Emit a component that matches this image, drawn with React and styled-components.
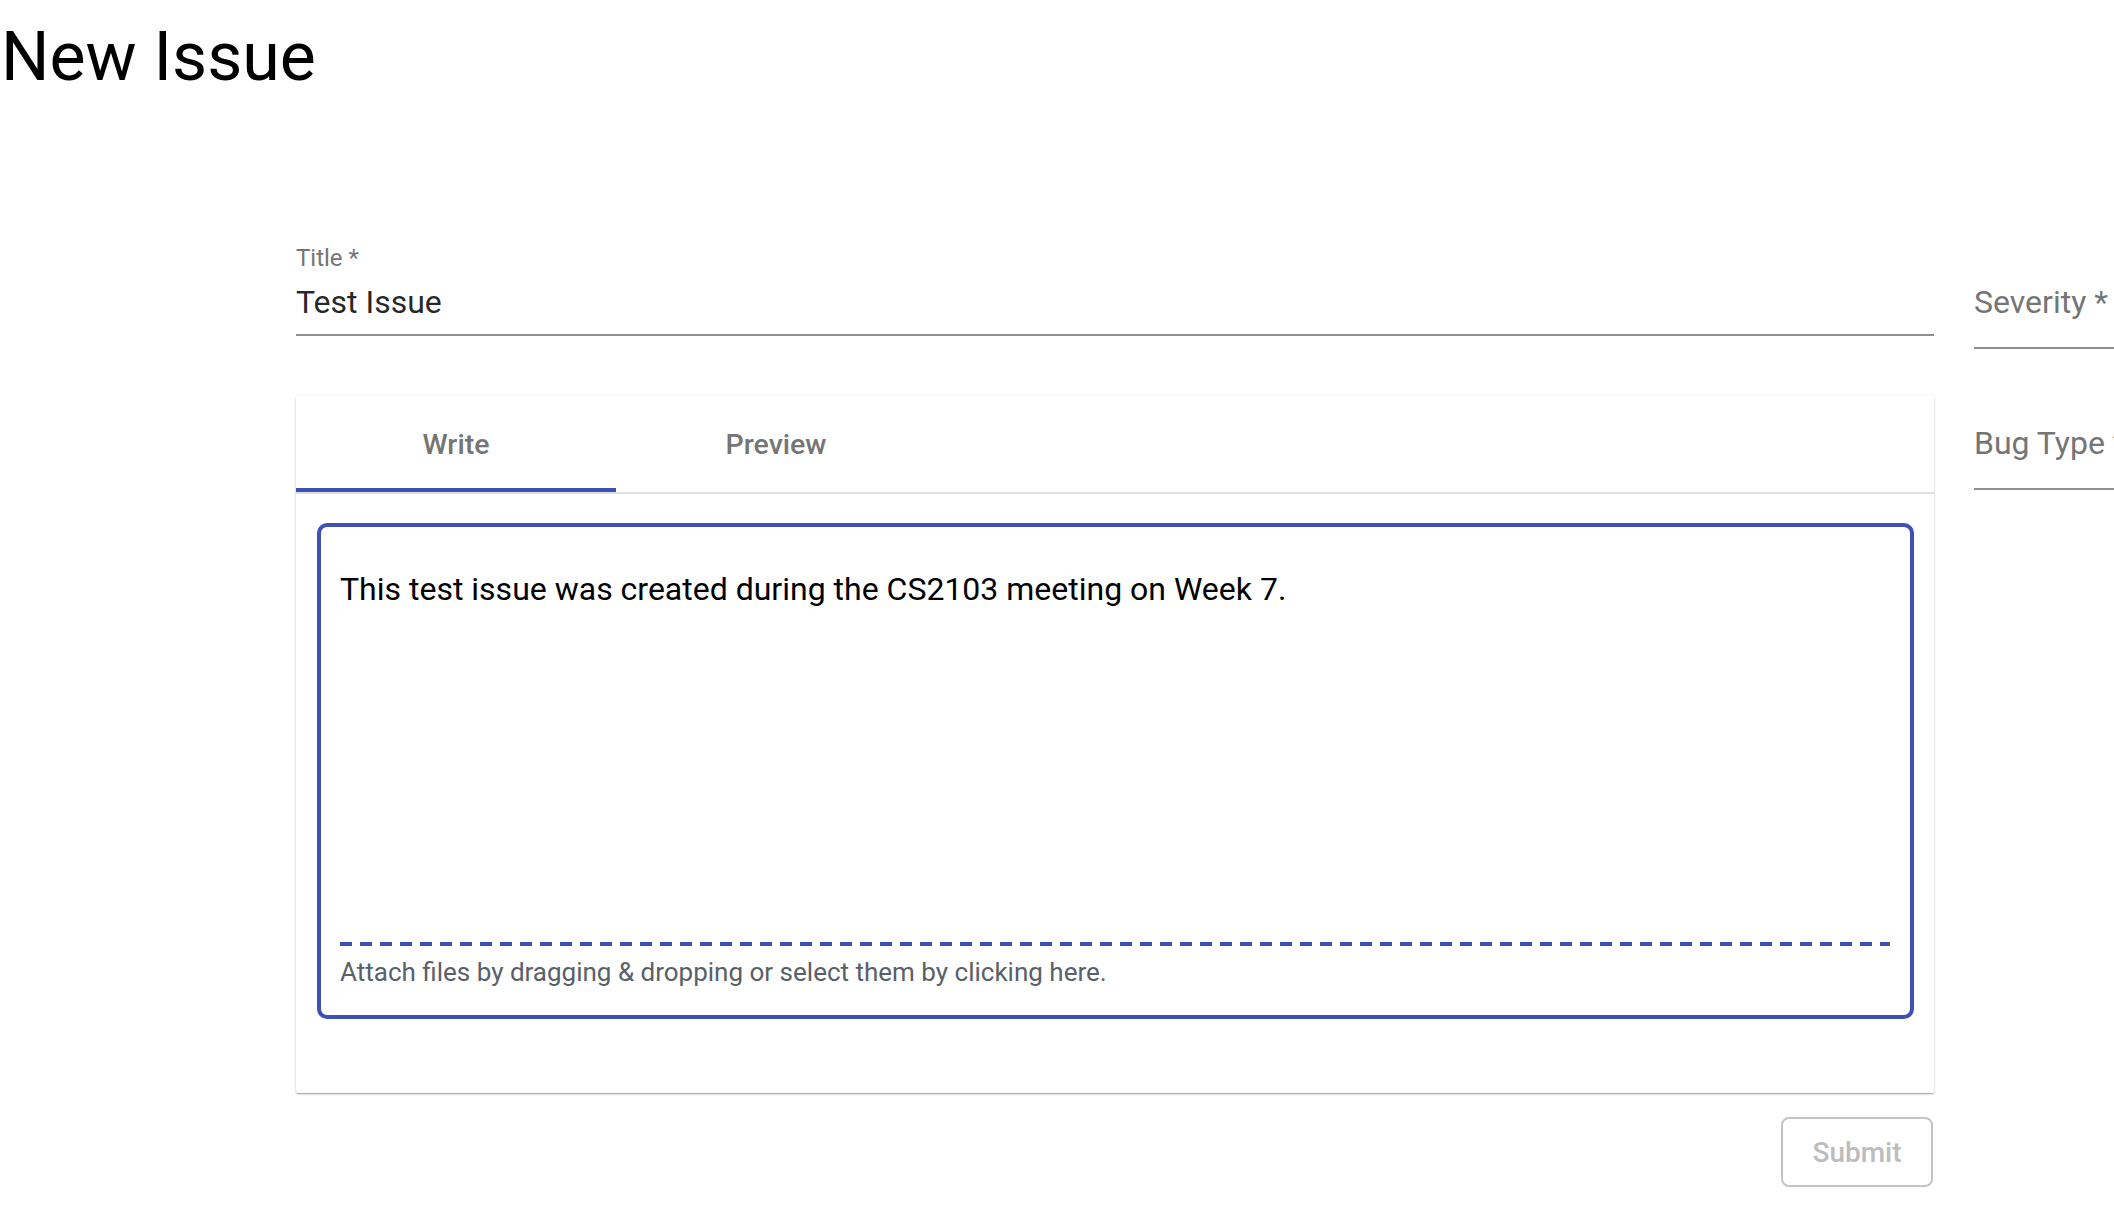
import React from 'react'
import styled, { createGlobalStyle } from 'styled-components'

const Global = createGlobalStyle`
body{
  margin:0;
  background:#fff;
  font-family:Roboto, "Liberation Sans", sans-serif;
  overflow:hidden;
}
*{box-sizing:border-box;}
`

const App = () => {
  return (
    <Page>
      <Global/>
      <Heading>New Issue</Heading>
      <Layout>
        <Main>
          <Field>
            <Label>Title *</Label>
            <Input>Test Issue</Input>
          </Field>
          <Card>
            <Tabs>
              <Tab active>Write</Tab>
              <Tab>Preview</Tab>
            </Tabs>
            <CardBody>
              <Editor>
                <EditorText>This test issue was created during the CS2103 meeting on Week 7.</EditorText>
                <Dashes/>
                <DropText>Attach files by dragging &amp; dropping or select them by clicking here.</DropText>
              </Editor>
            </CardBody>
          </Card>
          <Actions>
            <SubmitButton disabled>Submit</SubmitButton>
          </Actions>
        </Main>
        <Side>
          <SelectField>Severity *</SelectField>
          <SelectField>Bug Type *</SelectField>
        </Side>
      </Layout>
    </Page>
  )
}

export default App

const Page = styled.div`
width:2114px;
min-height:1230px;
`
const Heading = styled.h1`
margin:17px 0 0 0;
padding-left:1px;
font-size:68px;
line-height:80px;
font-weight:400;
color:#000;
`
const Layout = styled.div`
display:grid;
grid-template-columns:1638px 1fr;
column-gap:40px;
padding-left:296px;
margin-top:147px;
`
const Main = styled.div`
display:flex;
flex-direction:column;
`
const Field = styled.div`
display:flex;
flex-direction:column;
gap:10px;
`
const Label = styled.div`
font-size:24px;
line-height:28px;
color:#757575;
`
const Input = styled.div`
font-size:32px;
line-height:40px;
color:rgba(0,0,0,0.87);
padding-bottom:12px;
border-bottom:2px solid #8f8f8f;
`
const Card = styled.div`
margin-top:60px;
background:#fff;
border-radius:2px;
box-shadow:0 1px 3px rgba(0,0,0,0.2), 0 1px 1px rgba(0,0,0,0.14), 0 2px 1px -1px rgba(0,0,0,0.12);
`
const Tabs = styled.div`
display:flex;
border-bottom:2px solid #e0e0e0;
`
const Tab = styled.div`
width:320px;
height:96px;
display:flex;
align-items:center;
justify-content:center;
padding-top:4px;
font-size:28.5px;
font-weight:500;
color:#757575;
border-bottom:4px solid ${p => p.active ? '#3f51b5' : 'transparent'};
`
const CardBody = styled.div`
padding:29px 20px 74px 21px;
`
const Editor = styled.div`
height:496px;
border:4px solid #3f51b5;
border-radius:10px;
padding:42px 20px 28px 19px;
display:flex;
flex-direction:column;
`
const EditorText = styled.div`
flex:1;
font-size:32px;
line-height:40px;
color:#000;
`
const Dashes = styled.div`
height:4px;
background:repeating-linear-gradient(to right, #3f51b5 0 12px, transparent 12px 20px);
`
const DropText = styled.div`
margin-top:11px;
font-size:26px;
line-height:30px;
color:#586069;
`
const Actions = styled.div`
display:flex;
justify-content:flex-end;
margin-top:24px;
`
const SubmitButton = styled.button`
width:152px;
height:70px;
margin-right:1px;
background:#fff;
border:2px solid #c4c4c4;
border-radius:8px;
font-family:Roboto, "Liberation Sans", sans-serif;
font-size:28px;
font-weight:500;
color:#bdbdbd;
`
const Side = styled.div`
display:flex;
flex-direction:column;
gap:74px;
padding-top:38px;
`
const SelectField = styled.div`
width:420px;
font-size:32px;
line-height:40px;
color:#757575;
white-space:nowrap;
padding-bottom:25px;
border-bottom:2px solid #8f8f8f;
`
